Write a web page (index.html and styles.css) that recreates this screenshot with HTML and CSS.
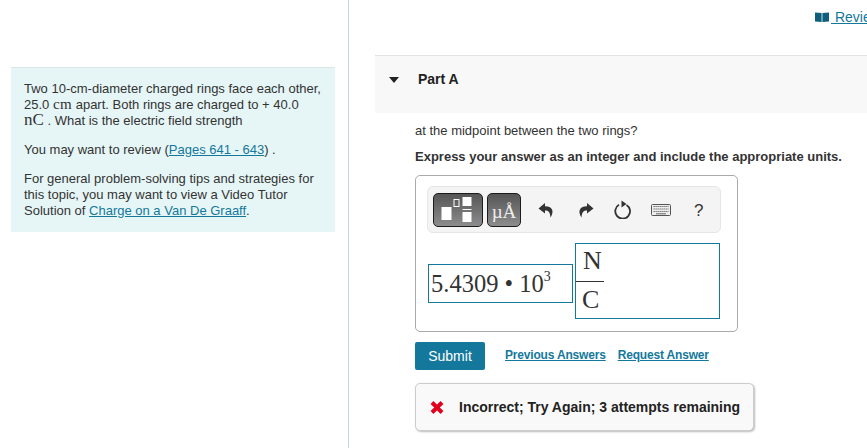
FILE: index.html
```html
<!DOCTYPE html>
<html lang="en">
<head>
    <meta charset="UTF-8">
    <meta name="viewport" content="width=device-width, initial-scale=1.0">
    <title>Part A</title>
    <link rel="stylesheet" href="styles.css">
</head>
<body>
    <div class="page">
        <div class="left-col">
            <div class="intro">
                <p>Two 10-cm-diameter charged rings face each other, 25.0 <span class="math">cm</span> apart. Both rings are charged to + 40.0<br><span class="math big">nC</span> . What is the electric field strength</p>
                <p>You may want to review (<a href="#">Pages 641 - 643</a>) .</p>
                <p>For general problem-solving tips and strategies for this topic, you may want to view a Video Tutor Solution of <a href="#">Charge on a Van De Graaff</a>.</p>
            </div>
        </div>

        <div class="right-col">
            <div class="review-bar">
                <svg class="book" width="14" height="10" viewBox="0 0 14 10"><path d="M0 0.5 L6.6 1 V10 L0 9.5 Z M7.4 1 L14 0.5 V9.5 L7.4 10 Z"/></svg>
                <a href="#">&nbsp;Review</a>
            </div>

            <div class="part-head">
                <span class="caret"></span>
                <span class="part-title">Part A</span>
            </div>

            <div class="part-body">
                <p class="question">at the midpoint between the two rings?</p>
                <p class="instruction">Express your answer as an integer and include the appropriate units.</p>

                <div class="answer-card">
                    <div class="toolbar">
                        <button class="tool-btn templates" type="button">
                            <svg width="36" height="26" viewBox="0 0 36 26">
                                <rect x="1.5" y="10" width="10" height="13" fill="#fff"/>
                                <rect x="14" y="2.5" width="5" height="7" fill="none" stroke="#fff"/>
                                <rect x="22.5" y="0" width="9" height="9" fill="#fff"/>
                                <rect x="22.5" y="12" width="9" height="1" fill="#fff"/>
                                <rect x="22.5" y="15" width="9" height="10" fill="#fff"/>
                            </svg>
                        </button>
                        <button class="tool-btn units" type="button">&micro;&Aring;</button>
                        <svg class="tool-icon first" width="16" height="16" viewBox="0 0 16 16"><path d="M7 1 L0.5 6.5 L7 11.5 V8.5 C10.5 8.5 12 10 12.5 15.5 C16 10 15.5 4.5 7 4.2 Z"/></svg>
                        <svg class="tool-icon" width="16" height="16" viewBox="0 0 16 16"><path d="M9 1 L15.5 6.5 L9 11.5 V8.5 C5.5 8.5 4 10 3.5 15.5 C0 10 0.5 4.5 9 4.2 Z"/></svg>
                        <svg class="tool-icon refresh" width="18" height="19" viewBox="0 0 18 19"><path d="M12.5 4.9 A7.4 7.4 0 1 1 5 4.8" fill="none" stroke="#333" stroke-width="1.8"/><path d="M7.5 0.5 L12.5 4 L7.5 7.5 Z"/></svg>
                        <svg class="tool-icon kbd" width="20" height="12" viewBox="0 0 20 12"><rect x="0.5" y="0.5" width="19" height="11" rx="1" fill="#eee" stroke="#555"/><path d="M2.5 2.5 H17.5 M2.5 5 H17.5 M2.5 7.5 H17.5" stroke="#666" stroke-width="1.2" stroke-dasharray="1.3 .7"/><path d="M5 9.8 H15" stroke="#666"/></svg>
                        <span class="help">?</span>
                    </div>
                    <div class="math-row">
                        <div class="math-box value">5.4309 &bull; 10<sup>3</sup></div>
                        <div class="math-box unit">
                            <div class="fraction">
                                <span class="num">N</span>
                                <span class="den">C</span>
                            </div>
                        </div>
                    </div>
                </div>

                <div class="actions">
                    <button class="submit" type="button">Submit</button>
                    <a href="#">Previous Answers</a>
                    <a href="#">Request Answer</a>
                </div>

                <div class="feedback">
                    <svg width="14" height="13" viewBox="0 0 14 13"><path d="M2 1.5 L7 6.5 L12 1.5 M2 11.5 L7 6.5 L12 11.5" fill="none" stroke="#e1001e" stroke-width="4"/></svg>
                    <span>Incorrect; Try Again; 3 attempts remaining</span>
                </div>
            </div>
        </div>
    </div>
</body>
</html>
```

FILE: styles.css
```css
html, body {
    margin: 0;
    height: 100%;
    overflow: hidden;
    background: #fff;
}
body {
    font-family: "Liberation Sans", Arial, sans-serif;
    font-size: 13px;
    color: #333;
}
a {
    color: #14789c;
}
.page {
    display: flex;
    height: 448px;
}
.left-col {
    flex: 0 0 349px;
    box-sizing: border-box;
    border-right: 1px solid #c5d5e4;
    padding: 67px 13px 0 11px;
}
.intro {
    background: #e6f6f6;
    border-top: 1px solid #dde5e8;
    padding: 13px 13px 13px 13px;
    line-height: 16px;
}
.intro p {
    margin: 0 0 13px;
}
.intro p:last-child {
    margin-bottom: 0;
}
.math {
    font-family: "Liberation Serif", serif;
    font-size: 15px;
    line-height: 0;
    letter-spacing: 0.4px;
}
.math.big {
    font-size: 17px;
    letter-spacing: 0;
}
.right-col {
    flex: 1;
    min-width: 0;
    padding-left: 26px;
}
.review-bar {
    height: 55px;
    padding: 9px 0 0 440px;
    box-sizing: border-box;
    white-space: nowrap;
    line-height: 16px;
    font-size: 14px;
    display: flex;
    align-items: flex-start;
}
.book {
    fill: #0d5f7c;
    margin-top: 3px;
    flex: none;
}
.review-bar a {
    margin-left: 2px;
}
.part-head {
    height: 58px;
    box-sizing: border-box;
    background: #f8f8f8;
    border-top: 1px solid #e2e4e4;
    display: flex;
    align-items: flex-start;
    padding: 15px 0 0 14px;
}
.caret {
    width: 0;
    height: 0;
    border-left: 5.5px solid transparent;
    border-right: 5.5px solid transparent;
    border-top: 6px solid #222;
    margin-top: 6px;
}
.part-title {
    margin-left: 19px;
    font-weight: bold;
    font-size: 14px;
    line-height: 16px;
    color: #222;
}
.part-body {
    padding: 10px 0 0 40px;
}
.question {
    margin: 0;
    line-height: 16px;
}
.instruction {
    margin: 10px 0 0;
    font-weight: bold;
    line-height: 16px;
}
.answer-card {
    width: 323px;
    height: 157px;
    box-sizing: border-box;
    margin-top: 10px;
    border: 1px solid #aaa;
    border-radius: 5px;
    padding: 10px 11px;
}
.toolbar {
    width: 294px;
    height: 47px;
    box-sizing: border-box;
    background: #f4f4f4;
    border: 1px solid #e6e6e6;
    border-radius: 6px;
    display: flex;
    align-items: center;
    padding-left: 5px;
}
.tool-btn {
    height: 34px;
    padding: 0;
    border: 1px solid #1c1c1c;
    border-radius: 5px;
    background: linear-gradient(#565656, #8c8c8c);
    color: #eee;
    display: flex;
    align-items: center;
    justify-content: center;
    font-family: "Liberation Serif", serif;
    flex: none;
}
.templates {
    width: 50px;
}
.units {
    width: 34px;
    margin-left: 4px;
    font-size: 19px;
    padding-top: 4px;
}
.tool-icon {
    flex: none;
    fill: #333;
    margin-left: 24px;
}
.tool-icon.first {
    margin-left: 17px;
}
.tool-icon.refresh {
    margin-left: 20px;
}
.tool-icon.kbd {
    margin-left: 19px;
}
.help {
    margin-left: 23px;
    font-size: 17px;
    color: #333;
    padding-top: 2px;
}
.math-row {
    display: flex;
    align-items: center;
    gap: 2px;
    margin: 10px 0 0 1px;
}
.math-box {
    box-sizing: border-box;
    width: 145px;
    border: 1px solid #14789c;
    font-family: "Liberation Serif", serif;
    font-size: 24.5px;
    color: #333;
}
.value {
    height: 39px;
    margin-top: 4px;
    line-height: 37px;
    padding-left: 2px;
}
.value sup {
    font-size: 14px;
    line-height: 0;
    vertical-align: 11px;
}
.unit {
    height: 76px;
}
.fraction {
    width: 28px;
    text-align: center;
    line-height: 33px;
    font-size: 26px;
}
.num {
    display: block;
    height: 37px;
    border-bottom: 1px solid #333;
    padding-left: 5px;
}
.den {
    display: block;
    text-align: left;
    padding-left: 6px;
    padding-top: 1px;
}
.actions {
    display: flex;
    align-items: flex-start;
    margin-top: 10px;
    font-size: 12px;
    font-weight: bold;
}
.submit {
    width: 70px;
    height: 28px;
    background: #14789c;
    color: #fff;
    border: none;
    border-radius: 2px;
    font-family: inherit;
    font-size: 14px;
    margin-right: 20px;
    padding: 0;
}
.actions a {
    margin-right: 12px;
    line-height: 14px;
    margin-top: 6px;
    letter-spacing: -0.18px;
}
.feedback {
    width: 339px;
    height: 48px;
    box-sizing: border-box;
    margin-top: 13px;
    background: #f9f9f9;
    border: 1px solid #ccc;
    border-radius: 5px;
    box-shadow: 1px 1px 2px #bbb;
    display: flex;
    align-items: center;
    padding-left: 14px;
    font-size: 14px;
    font-weight: bold;
    color: #222;
}
.feedback span {
    margin-left: 15px;
}
```
